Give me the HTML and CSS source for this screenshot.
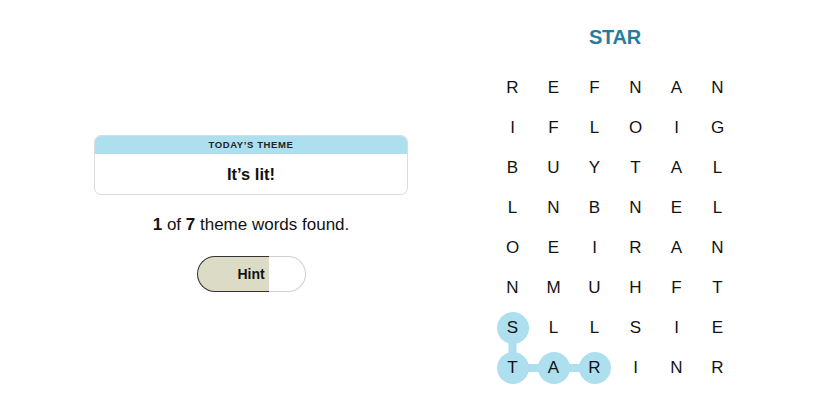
FILE: index.html
```html
<!DOCTYPE html>
<html>
<head>
<meta charset="utf-8">
<link rel="stylesheet" href="styles.css">
</head>
<body>
<main class="page">
  <section class="side">
    <div class="theme-card">
      <div class="theme-label">TODAY’S THEME</div>
      <div class="theme-text">It’s lit!</div>
    </div>
    <p class="progress"><b>1</b> of <b>7</b> theme words found.</p>
    <button class="hint">
      <span class="hint-fill"></span>
      <span class="hint-rest"></span>
      <span class="hint-label">Hint</span>
    </button>
  </section>
  <section class="board">
    <h1 class="word">STAR</h1>
    <div class="grid-wrap">
      <svg class="links" width="246" height="320" viewBox="0 0 246 320">
        <polyline points="20.5,260 20.5,300 102.5,300" fill="none" stroke="#aedfee" stroke-width="8"/>
      </svg>
      <div class="grid">
        <span>R</span><span>E</span><span>F</span><span>N</span><span>A</span><span>N</span>
        <span>I</span><span>F</span><span>L</span><span>O</span><span>I</span><span>G</span>
        <span>B</span><span>U</span><span>Y</span><span>T</span><span>A</span><span>L</span>
        <span>L</span><span>N</span><span>B</span><span>N</span><span>E</span><span>L</span>
        <span>O</span><span>E</span><span>I</span><span>R</span><span>A</span><span>N</span>
        <span>N</span><span>M</span><span>U</span><span>H</span><span>F</span><span>T</span>
        <span class="sel">S</span><span>L</span><span>L</span><span>S</span><span>I</span><span>E</span>
        <span class="sel">T</span><span class="sel">A</span><span class="sel">R</span><span>I</span><span>N</span><span>R</span>
      </div>
    </div>
  </section>
</main>
</body>
</html>
```

FILE: styles.css
```css
* { box-sizing: border-box; }
html, body { margin: 0; padding: 0; background: #fff; }
body {
  width: 825px;
  height: 413px;
  overflow: hidden;
  font-family: "Liberation Sans", Arial, sans-serif;
  color: #121212;
}
.page {
  display: flex;
  align-items: flex-start;
}
.side {
  width: 314px;
  margin-left: 94px;
  padding-top: 135px;
  display: flex;
  flex-direction: column;
  align-items: center;
}
.theme-card {
  width: 314px;
  border: 1px solid #dcdcdc;
  border-radius: 7px;
  overflow: hidden;
}
.theme-label {
  height: 18px;
  background: #aedfee;
  font-size: 9.5px;
  font-weight: bold;
  letter-spacing: 0.6px;
  line-height: 18px;
  text-align: center;
  color: #222;
}
.theme-text {
  height: 40px;
  line-height: 40px;
  font-size: 16.5px;
  font-weight: bold;
  text-align: center;
  color: #111;
}
.progress {
  margin: 20px 0 0;
  font-size: 17px;
  line-height: 20px;
  color: #121212;
}
.hint {
  margin-top: 21px;
  width: 109px;
  height: 36px;
  padding: 0;
  border: 0;
  background: none;
  display: grid;
  grid-template-columns: 72px 37px;
  font-family: inherit;
}
.hint-fill {
  grid-area: 1 / 1;
  background: #dcdcc6;
  border: 1px solid #333;
  border-right: 0;
  border-radius: 18px 0 0 18px;
}
.hint-rest {
  grid-area: 1 / 2;
  background: #fff;
  border: 1px solid #cfcfcf;
  border-left: 0;
  border-radius: 0 18px 18px 0;
}
.hint-label {
  grid-area: 1 / 1 / 2 / 3;
  align-self: center;
  justify-self: center;
  font-size: 14px;
  font-weight: bold;
  color: #121212;
  position: relative;
}
.board {
  margin-left: 84px;
  width: 246px;
  padding-top: 25px;
  display: flex;
  flex-direction: column;
  align-items: center;
}
.word {
  margin: 0 0 19px;
  height: 24px;
  line-height: 24px;
  font-size: 20px;
  font-weight: bold;
  color: #237e9e;
  letter-spacing: -0.2px;
}
.grid-wrap {
  position: relative;
  width: 246px;
  height: 320px;
}
.links {
  position: absolute;
  left: 0;
  top: 0;
}
.grid {
  position: relative;
  display: grid;
  grid-template-columns: repeat(6, 41px);
  grid-template-rows: repeat(8, 40px);
}
.grid span {
  display: flex;
  align-items: center;
  justify-content: center;
  font-size: 17px;
  color: #121212;
}
.grid .sel {
  width: 32px;
  height: 32px;
  margin: 4px 4.5px;
  border-radius: 50%;
  background: #aedfee;
}
```
